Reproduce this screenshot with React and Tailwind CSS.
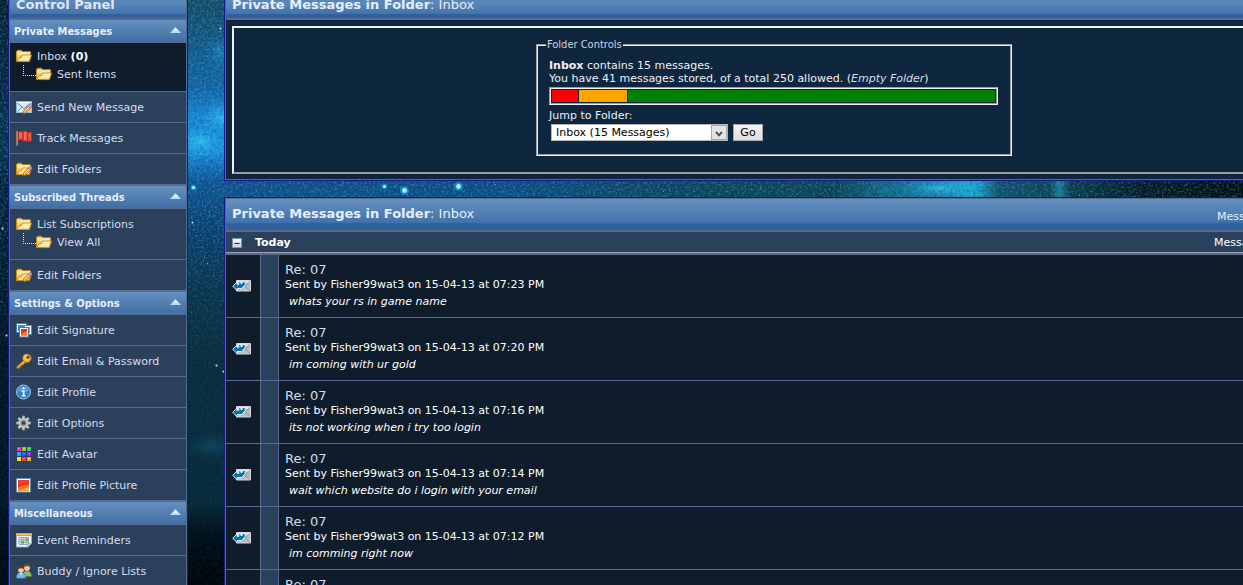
import React from "react";

const PANEL_TEXT = "font-['DejaVu_Sans',Verdana,sans-serif]";
const NARROW_TEXT = "font-['DejaVu_Sans_Condensed','DejaVu_Sans',Tahoma,sans-serif]";

function makeStars(count) {
  let seed = 20130415;
  const next = () => {
    seed = (seed * 1103515245 + 12345) % 2147483648;
    return seed / 2147483648;
  };
  return Array.from({ length: count }, () => ({
    x: next() * 1300,
    y: next() * 600,
    bright: next(),
  }));
}

const STARS = makeStars(1800);

const BRIGHT_STARS = [
  [193, 187, 2],
  [404, 190, 3],
  [458, 186, 3],
  [384, 186, 2],
  [220, 28, 1],
  [216, 365, 1],
  [223, 371, 1],
  [6, 335, 1],
  [2, 228, 1],
  [192, 222, 1],
];

function Starfield() {
  return (
    <svg aria-hidden="true" className="absolute inset-0 h-full w-full bg-[#04121c]">
      <defs>
        <linearGradient id="sky" gradientUnits="userSpaceOnUse" x1="0" y1="0" x2="0" y2="585">
          <stop offset="0" stopColor="#174a63" />
          <stop offset="0.08" stopColor="#145a86" />
          <stop offset="0.15" stopColor="#1565a8" />
          <stop offset="0.2" stopColor="#1b86d8" />
          <stop offset="0.26" stopColor="#198de0" />
          <stop offset="0.31" stopColor="#115594" />
          <stop offset="0.4" stopColor="#0d3d6e" />
          <stop offset="0.5" stopColor="#0c3348" />
          <stop offset="0.62" stopColor="#0b2d3c" />
          <stop offset="0.76" stopColor="#0a2a3a" />
          <stop offset="0.86" stopColor="#082936" />
          <stop offset="0.91" stopColor="#03101a" />
          <stop offset="1" stopColor="#010509" />
        </linearGradient>
        <linearGradient id="band" gradientUnits="userSpaceOnUse" x1="225" y1="0" x2="1243" y2="0">
          <stop offset="0" stopColor="#10508c" />
          <stop offset="0.3" stopColor="#0e4c80" />
          <stop offset="0.42" stopColor="#0f4560" />
          <stop offset="0.6" stopColor="#0e4254" />
          <stop offset="0.65" stopColor="#146a86" />
          <stop offset="0.7" stopColor="#156684" />
          <stop offset="0.73" stopColor="#20a6c8" />
          <stop offset="0.74" stopColor="#1f9fc2" />
          <stop offset="0.76" stopColor="#12506a" />
          <stop offset="0.81" stopColor="#0e4458" />
          <stop offset="0.82" stopColor="#198098" />
          <stop offset="0.83" stopColor="#0d3a48" />
          <stop offset="0.9" stopColor="#051a22" />
          <stop offset="1" stopColor="#010a0d" />
        </linearGradient>
        <radialGradient id="glow">
          <stop offset="0" stopColor="#35d4ff" stopOpacity="0.75" />
          <stop offset="1" stopColor="#1a8fe0" stopOpacity="0" />
        </radialGradient>
        <linearGradient id="fade" gradientUnits="userSpaceOnUse" x1="0" y1="0" x2="0" y2="585">
          <stop offset="0" stopColor="#fff" />
          <stop offset="0.4" stopColor="#fff" />
          <stop offset="0.6" stopColor="#444" />
          <stop offset="0.85" stopColor="#333" />
          <stop offset="0.92" stopColor="#000" />
        </linearGradient>
        <mask id="fadeMask">
          <rect width="100%" height="100%" fill="url(#fade)" />
        </mask>
        <filter id="grain" x="0" y="0" width="100%" height="100%">
          <feTurbulence type="fractalNoise" baseFrequency="0.45" numOctaves="3" seed="4" />
          <feColorMatrix values="0 0 0 0 0.1  0 0 0 0 0.65  0 0 0 0 0.95  1.8 0 0 0 -0.8" />
        </filter>
        <filter id="shade" x="0" y="0" width="100%" height="100%">
          <feTurbulence type="fractalNoise" baseFrequency="0.3" numOctaves="3" seed="11" />
          <feColorMatrix values="0 0 0 0 0  0 0 0 0 0.04  0 0 0 0 0.12  0 2.4 0 0 -1" />
        </filter>
      </defs>
      <rect width="100%" height="100%" fill="url(#sky)" />
      <rect x="225" y="178" width="100%" height="22" fill="url(#band)" />
      <ellipse cx="200" cy="142" rx="34" ry="20" fill="url(#glow)" />
      <ellipse cx="222" cy="118" rx="22" ry="20" fill="url(#glow)" />
      <ellipse cx="220" cy="52" rx="16" ry="20" fill="url(#glow)" opacity="0.4" />
      <ellipse cx="940" cy="188" rx="48" ry="14" fill="url(#glow)" />
      <ellipse cx="212" cy="446" rx="28" ry="14" fill="url(#glow)" opacity="0.22" />
      <rect width="8" height="100%" fill="#02101a" opacity="0.75" />
      <rect width="100%" height="100%" filter="url(#shade)" opacity="0.3" />
      <g mask="url(#fadeMask)">
        <rect width="100%" height="100%" filter="url(#grain)" opacity="0.5" />
      </g>
      {STARS.map((s, i) => (
        <rect
          key={i}
          x={Math.round(s.x)}
          y={Math.round(s.y)}
          width="1"
          height="1"
          fill="#2cc4f6"
          opacity={(s.y > 470 ? 0.2 : 0.75) * s.bright}
        />
      ))}
      {BRIGHT_STARS.map(([x, y, r]) => (
        <g key={`${x}-${y}`}>
          <circle cx={x + 0.5} cy={y + 0.5} r={r * 1.5} fill="#1fb4ff" opacity="0.5" />
          <circle cx={x + 0.5} cy={y + 0.5} r={r * 0.8} fill="#a9f4ff" />
        </g>
      ))}
    </svg>
  );
}

function FolderShape() {
  return (
    <>
      <path d="M.5 13.5V3.5l1-1.2h4l1.2 1.5h7.8v3" fill="#f3cf72" stroke="#c98a1d" />
      <path d="M1.5 4h12.5v3H1.5z" fill="#fbe5a0" />
      <path d="M.8 13.6 3 9.6h2.200l1.300-2.500h9l-2.200 6.500z" fill="#fce296" stroke="#c98a1d" />
      <path d="M7.200 8.200h7M5.600 10.400h8" stroke="#fff5cb" />
    </>
  );
}

function PencilShape() {
  return (
    <>
      <path d="M6.800 14.900l.8-3.100 5.200-5.200 2.200 2.200-5.200 5.300z" fill="#f9a63a" stroke="#a9641c" strokeWidth=".7" />
      <path d="M8.600 12.400l4.600-4.600" stroke="#ffe08a" />
      <path d="M12.300 7.100l1.400-1.300q1-.7 1.700.1t0 1.700L14 9z" fill="#dba3b0" stroke="#7888b8" strokeWidth=".8" />
      <path d="M6.800 14.900l.4-1.500 1.100 1.100z" fill="#4a3220" />
    </>
  );
}

const ICONS = {
  folder: <FolderShape />,
  editFolder: (
    <>
      <FolderShape />
      <PencilShape />
    </>
  ),
  mail: (
    <>
      <rect x=".5" y="2.5" width="15" height="11" fill="#d8edfb" stroke="#8cb9de" />
      <path d="M1 3h14v1H1z" fill="#fff" />
      <path d="M1.5 4l6.5 5.5L14.5 4M1.5 12.5L6 8M14.5 12.5L10 8" fill="none" stroke="#4c8fc4" />
      <PencilShape />
    </>
  ),
  flag: (
    <>
      <path d="M.3 1H2v14.5H.3z" fill="#a8763a" />
      <path d="M1 1.5v14" stroke="#dcb26e" strokeWidth=".6" />
      <path d="M2.5 1.8q2.200-1.200 4.300 0V1.200h4.200l.8 1.200q1.700.3 3.900-.6v9q-2 1.200-4.200.4H7.500l-.8-1q-2.200-1-4.200.2z" fill="#e5402f" stroke="#b5231c" strokeWidth=".6" />
      <path d="M3 2.500q1.800-.9 3.300 0v6.500q-1.600-.7-3.300 0z" fill="#ee6450" />
      <path d="M8 2h2.500v7.800H8z" fill="#f4705b" />
      <path d="M12.300 3.200q1.400.2 2.700-.4v7.500q-1.300.5-2.700.2z" fill="#ea5543" />
      <path d="M7 2v8M11.500 2.500v8.500" stroke="#a51e1a" strokeWidth=".7" />
    </>
  ),
  signature: (
    <>
      <rect x=".5" y="1.5" width="10" height="9" fill="#fff" stroke="#3d7fc4" />
      <path d="M2 3h7v6H2z" fill="#3b8bd8" />
      <rect x="8.5" y="3.5" width="7" height="9" fill="#fff" stroke="#4b8cc4" />
      <path d="M10 5h4v6h-4z" fill="#7cb342" />
      <rect x="3.5" y="5.5" width="9" height="9.5" fill="#fff" stroke="#3f7cb5" />
      <path d="M5 7h6v6.5H5z" fill="#e8281c" />
      <path d="M5 13.5q1-4 6-4v4z" fill="#ff7a2a" />
    </>
  ),
  key: (
    <>
      <path d="M8.200 6.800.9 13.600v1.700h2.600v-1.500h1.700v-1.700h1.700l2.700-2.700z" fill="#f0a93a" stroke="#a8681a" strokeWidth=".8" />
      <circle cx="10.9" cy="5.2" r="4.2" fill="#f8b94c" stroke="#a8681a" strokeWidth=".8" />
      <path d="M8 4.5q.8-2.400 3.200-2.300" fill="none" stroke="#ffe9a8" />
      <circle cx="12" cy="4.2" r="1.4" fill="#2b415b" stroke="#a8681a" strokeWidth=".7" />
    </>
  ),
  info: (
    <>
      <circle cx="7.5" cy="8" r="7" fill="#2f80cb" stroke="#a3c8ec" />
      <path d="M2 7a5.600 5.300 0 0 1 11 0q-5.500 2.500-11 0z" fill="#5a9fdb" />
      <path d="M6.500 3.300h2v2h-2zM5.800 6.500h2.700v4.700h1.200v1.300H5.600v-1.300h1.200V7.800h-1z" fill="#fff" />
    </>
  ),
  gear: (
    <>
      {[0, 45, 90, 135, 180, 225, 270, 315].map((a) => (
        <path key={a} d="M6 3.700 6.300.8h2.400l.3 2.900z" fill="#c9c9c9" stroke="#777" strokeWidth=".3" transform={`rotate(${a} 7.5 8)`} />
      ))}
      <circle cx="7.5" cy="8" r="4" fill="#8f8f8f" stroke="#cfcfcf" strokeWidth="1.6" />
      <circle cx="7.5" cy="8" r="1.8" fill="#33404f" />
    </>
  ),
  grid: (
    <>
      {["#ff1fd0", "#7fd400", "#19e052", "#1f9cff", "#2c4cff", "#a21fff", "#ffd81f", "#f03a1f", "#ffa01f"].map((c, i) => (
        <g key={c}>
          <rect x={1 + (i % 3) * 5} y={1 + Math.floor(i / 3) * 5} width="4" height="4" fill={c} />
          <rect x={2 + (i % 3) * 5} y={2 + Math.floor(i / 3) * 5} width="2" height="1" fill="#fff" opacity=".35" />
        </g>
      ))}
    </>
  ),
  picture: (
    <>
      <rect x=".5" y="1.5" width="14" height="13.5" fill="#fff" stroke="#5c93c4" />
      <path d="M2 3h11v10.5H2z" fill="#e5291a" />
      <path d="M2 11q3-3.500 11-3.500v6H2z" fill="#fb7a22" />
      <path d="M6 13.500q2-3 7-3v3z" fill="#ffb23c" />
      <path d="M2 3h11v2.500L2 8z" fill="#f2402c" />
    </>
  ),
  calendar: (
    <>
      <path d="M.5 1.5h15v10L12 15H.5z" fill="#f7fafc" stroke="#8ab0cf" />
      <path d="M0 1h16v3H0z" fill="#f39a2a" />
      <path d="M1 2h14v.8H1z" fill="#ffd08a" />
      <path d="M3 5.500h9.500v7H3zM3 7.800h9.500M3 10.200h9.500M5.300 5.500v7M7.700 5.500v7M10.100 5.500v7" fill="none" stroke="#7d8ea0" strokeWidth=".8" />
      <path d="M9.500 6.500H12V9H9.500zM5.500 9H8v2.500H5.500z" fill="#6fb80e" />
      <path d="M11.500 15.500v-4h4z" fill="#b5d0e8" stroke="#7fa6c8" strokeWidth=".6" />
    </>
  ),
  buddies: (
    <>
      <path d="M7 13.500q-.5-5.500 4-5.500t4.500 5.500z" fill="#8dc05a" stroke="#55822f" strokeWidth=".6" />
      <circle cx="11" cy="4.8" r="3.1" fill="#f1c693" />
      <path d="M7.700 4.800Q7.500 1 11 1t3.300 3.800q-1-1.700-3-1.700t-3.600 1.700z" fill="#7a4a1f" />
      <path d="M.5 15.300q-.5-5.800 4.400-5.800t4.600 5.800z" fill="#78b7ee" stroke="#3b77b2" strokeWidth=".6" />
      <path d="M3.700 9.500 5 12l1.300-2.500z" fill="#fff" />
      <circle cx="5" cy="6.500" r="3" fill="#f5cf9f" />
      <path d="M1.800 6.800Q1.600 3 5 3t3.200 3.700Q7 5 5 5.200t-3.200 1.600z" fill="#5e3a1c" />
    </>
  ),
};

function Icon({ name }) {
  return (
    <svg aria-hidden="true" viewBox="0 0 16 16" className="h-4 w-4 shrink-0">
      {ICONS[name]}
    </svg>
  );
}

function SidebarHeading({ children }) {
  return (
    <div className="flex h-[25px] items-center justify-between border-y-2 border-[#566a93] bg-linear-to-b from-[#6591bf] to-[#4270a6] pr-[5px] pl-1">
      <h2 className={`${NARROW_TEXT} pt-[2px] text-[11px] leading-4 font-bold text-[#e6eefa]`}>{children}</h2>
      <button type="button" aria-label="Collapse section">
        <svg aria-hidden="true" viewBox="0 0 11 6" className="mb-[2px] h-[6px] w-[11px]">
          <path d="M5.5 0 11 6H0z" fill="#b9dcfa" />
          <path d="M5.5 1 8 4H3z" fill="#e6f4ff" />
        </svg>
      </button>
    </div>
  );
}

function SidebarList({ items }) {
  return (
    <ul className="divide-y divide-[#566a93]">
      {items.map(([icon, label]) => (
        <li key={label} className="bg-[#2b415b]">
          <a href="#" className="flex h-[30px] items-center gap-[5px] pl-[6px]">
            <Icon name={icon} />
            <span className="pt-[2px]">{label}</span>
          </a>
        </li>
      ))}
    </ul>
  );
}

function FolderTree({ root, child, className }) {
  return (
    <div className={`border-b border-[#566a93] pl-[6px] leading-[18px] ${className}`}>
      <a href="#" className="flex h-[18px] items-center gap-[5px]">
        <Icon name="folder" />
        <span className="pt-px">{root}</span>
      </a>
      <a href="#" className="flex h-[18px] items-center gap-[5px]">
        <span className="flex items-center">
          <svg aria-hidden="true" viewBox="0 0 20 18" className="h-[18px] w-5">
            <path d="M7.5 0v10.5H20" fill="none" stroke="#e5e9f2" strokeDasharray="1 1" />
          </svg>
          <Icon name="folder" />
        </span>
        <span className="pt-px">{child}</span>
      </a>
    </div>
  );
}

function Sidebar() {
  return (
    <nav className="w-[180px] shrink-0 border-x border-[#15158c] text-[11px] text-[#d5dcf0]">
      <div className="border-x border-[#566a93]">
        <div className="h-[18px] overflow-hidden bg-linear-to-b from-[#5a86b8] from-20% via-[#4373ac] via-75% to-[#2f609b] to-80% pl-[6px]">
          <h1 className="-mt-1 text-[13px] leading-[18px] font-bold text-[#dfe6f5]">Control Panel</h1>
        </div>
        <SidebarHeading>Private Messages</SidebarHeading>
        <FolderTree
          root={<>Inbox <b className="text-white">(0)</b></>}
          child="Sent Items"
          className="h-[49px] bg-[#0e1c2b] pt-1"
        />
        <SidebarList items={[["mail", "Send New Message"], ["flag", "Track Messages"], ["editFolder", "Edit Folders"]]} />
        <SidebarHeading>Subscribed Threads</SidebarHeading>
        <FolderTree root="List Subscriptions" child="View All" className="h-[51px] bg-[#2b415b] pt-[6px]" />
        <SidebarList items={[["editFolder", "Edit Folders"]]} />
        <SidebarHeading>Settings &amp; Options</SidebarHeading>
        <SidebarList
          items={[
            ["signature", "Edit Signature"],
            ["key", "Edit Email & Password"],
            ["info", "Edit Profile"],
            ["gear", "Edit Options"],
            ["grid", "Edit Avatar"],
            ["picture", "Edit Profile Picture"],
          ]}
        />
        <SidebarHeading>Miscellaneous</SidebarHeading>
        <SidebarList items={[["calendar", "Event Reminders"], ["buddies", "Buddy / Ignore Lists"]]} />
      </div>
    </nav>
  );
}

function PanelTitle() {
  return (
    <>
      <b>Private Messages in Folder</b>: Inbox
    </>
  );
}

function FolderControls() {
  return (
    <section className="border-x border-b border-[#15158c]">
      <div className="border-x border-b border-[#566a93] bg-[#0f263f]">
        <div className="h-5 overflow-hidden border-b-2 border-[#566a93] bg-linear-to-b from-[#5a86b8] from-20% via-[#4373ac] via-75% to-[#2f609b] to-80% pl-[6px]">
          <h2 className="-mt-1 text-[13px] leading-[18px] text-[#e6eefa]">
            <PanelTitle />
          </h2>
        </div>
        <div className="p-[6px] pb-[5px]">
          <div className="border-2 border-[#f0f0f0] border-r-[#a09c98] border-b-[#a09c98] px-2 pt-[10px] pb-4">
            <form className="mx-auto w-[476px]" onSubmit={(e) => e.preventDefault()}>
              <fieldset className="border-2 border-[#f0f0f0] px-[11px] pb-[13px] text-[11px] leading-[13px] text-[#eef0f4] [border-style:groove]">
                <legend className={`${NARROW_TEXT} -ml-[3px] px-px text-[11px] leading-[14px] text-[#cfd3d8]`}>Folder Controls</legend>
                <p className="pt-[7px]">
                  <b>Inbox</b> contains 15 messages.
                </p>
                <p>
                  You have 41 messages stored, of a total 250 allowed. (
                  <a href="#" className="text-[#d5dcf0] italic">Empty Folder</a>)
                </p>
                <div className="mt-[2px] flex h-[18px] w-[449px] gap-px border-2 border-[#f0f0f0] p-px [border-style:groove]">
                  <div className="w-[26px] bg-[#ff0000]" />
                  <div className="w-12 bg-[#ffa500]" />
                  <div className="flex-1 bg-[#008000]" />
                </div>
                <label htmlFor="folder" className="mt-1 block">Jump to Folder:</label>
                <div className="mt-[2px] flex gap-[5px] pl-[2px]">
                  <div className="relative">
                    <select
                      id="folder"
                      className="block h-[17px] w-[177px] appearance-none border border-[#b4b4b4] bg-white pl-1 text-[11px] leading-[15px] text-black"
                    >
                      <option>Inbox (15 Messages)</option>
                    </select>
                    <span className="pointer-events-none absolute top-px right-px flex h-[15px] w-4 items-center justify-center border border-[#a8a8a8] bg-[#e4e4e4]">
                      <svg aria-hidden="true" viewBox="0 0 8 6" className="mt-[2px] h-[6px] w-2">
                        <path d="M1 1l3 3.300L7 1" fill="none" stroke="#505050" strokeWidth="2" />
                      </svg>
                    </span>
                  </div>
                  <button
                    type="submit"
                    className="h-[17px] w-[30px] border border-[#a8a8a8] bg-linear-to-b from-[#f4f4f4] to-[#dedede] text-[11px] leading-[15px] text-black"
                  >
                    Go
                  </button>
                </div>
              </fieldset>
            </form>
          </div>
        </div>
      </div>
    </section>
  );
}

function ReplyIcon() {
  return (
    <svg role="img" aria-label="Replied message" viewBox="0 0 19 12" className="ml-[6px] h-3 w-[19px]">
      <path d="M4.5 .5h14v10.500h-14z" fill="#b9bdc2" stroke="#d4d7da" />
      <path d="M5 1h13v2H5z" fill="#d9dcdf" />
      <path d="M18 1.500l-5 4.500 5 4.500" fill="none" stroke="#858b93" strokeWidth=".8" />
      <path d="M.7 6.200 5 2v2.300h1.800V1.400h2v2h1.400v-2h3v3.400l-3.600 3.700H5v2.200z" fill="#0872ac" stroke="#f4fbff" strokeWidth=".9" />
    </svg>
  );
}

const MESSAGES = [
  ["07:23 PM", "whats your rs in game name"],
  ["07:20 PM", "im coming with ur gold"],
  ["07:16 PM", "its not working when i try too login"],
  ["07:14 PM", "wait which website do i login with your email"],
  ["07:12 PM", "im comming right now"],
];

function MessageRow({ children }) {
  return (
    <tr className="h-[63px]">
      <td className="border-r border-b border-[#566a93]">
        <ReplyIcon />
      </td>
      <td className="border-r border-b border-[#566a93] bg-[#2b415b]" />
      <td className="border-b border-[#566a93] pl-[6px] align-top text-[11px] leading-[14px] text-white">
        <a href="#" className="block pt-[7px] text-[13px] leading-4 text-[#d5dcf0]">Re: 07</a>
        {children}
      </td>
    </tr>
  );
}

function MessageList() {
  return (
    <section className="border border-[#15158c]">
      <div className="border border-[#566a93]">
        <div className="flex h-[33px] items-center border-b-2 border-[#566a93] bg-linear-to-b from-[#6591bf] via-[#4373ac] via-75% to-[#2f609b] to-80% pl-[6px] text-[#e6eefa]">
          <h2 className="flex-1 pb-[2px] text-[13px] leading-4">
            <PanelTitle />
          </h2>
          <span className="w-[105px] pt-[5px] text-[11px] leading-4">Messages</span>
        </div>
        <div className="flex h-[23px] items-center border-b-2 border-[#566a93] bg-[#2b415b] text-white shadow-[inset_0_-1px_0_#a3a3a3]">
          <button type="button" aria-label="Collapse Today" className="ml-[6px]">
            <svg aria-hidden="true" viewBox="0 0 10 10" className="h-[10px] w-[10px]">
              <rect x=".5" y=".5" width="9" height="9" fill="#d5dbea" stroke="#8390ab" />
              <path d="M1 1h8v3H1z" fill="#eef1f8" />
              <path d="M2.5 5.500h5" stroke="#1d2a40" />
            </svg>
          </button>
          <h3 className="ml-[13px] flex-1 text-[11px] leading-4 font-bold">Today</h3>
          <span className="w-[108px] text-[11px] leading-4">Messages</span>
        </div>
        <table className="w-full table-fixed border-separate border-spacing-0 bg-[#0e1c2b]">
          <colgroup>
            <col className="w-[35px]" />
            <col className="w-[18px]" />
            <col />
          </colgroup>
          <tbody>
            {MESSAGES.map(([time, preview]) => (
              <MessageRow key={time}>
                <p>Sent by Fisher99wat3 on 15-04-13 at {time}</p>
                <p className="pt-[3px] pl-1 italic">{preview}</p>
              </MessageRow>
            ))}
            <MessageRow />
          </tbody>
        </table>
      </div>
    </section>
  );
}

export default function App() {
  return (
    <div className={`${PANEL_TEXT} relative h-screen overflow-hidden bg-[#04121c]`}>
      <Starfield />
      <div className="relative flex pl-2">
        <Sidebar />
        <main className="-mr-[81px] ml-9 flex min-w-0 flex-1 flex-col gap-4">
          <FolderControls />
          <MessageList />
        </main>
      </div>
    </div>
  );
}
